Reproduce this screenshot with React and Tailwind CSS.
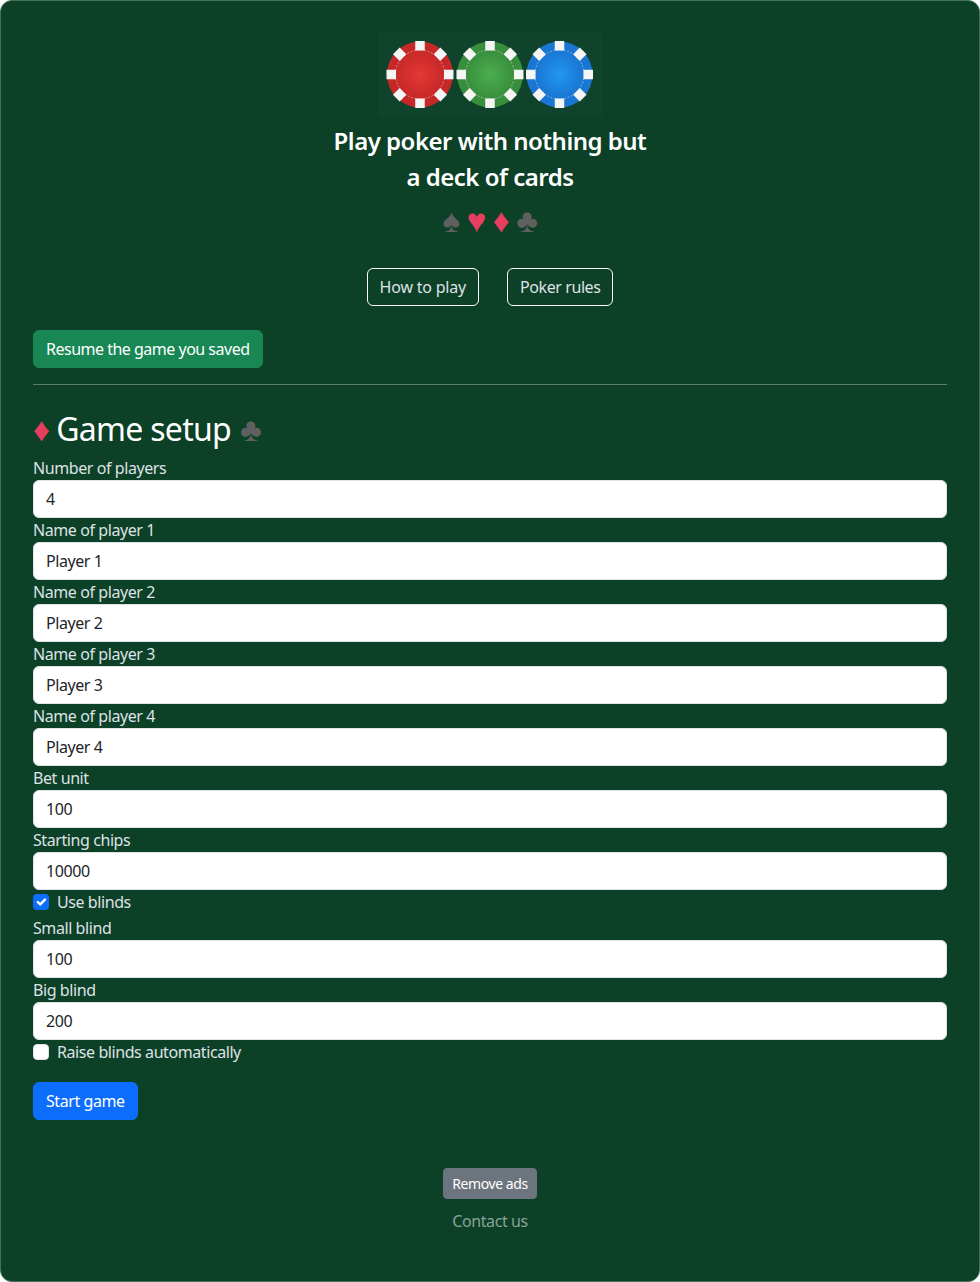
const font = { fontFamily: '"Noto Sans", sans-serif' };

const Chip = ({ cx, base, light }) => {
    const id = `grad-${cx}`;
    const angles = [0, 45, 90, 135, 180, 225, 270, 315];
    return (
        <g transform={`translate(${cx} 41.5)`}>
            <defs>
                <radialGradient id={id}>
                    <stop offset="0%" stopColor={light} />
                    <stop offset="100%" stopColor={base} />
                </radialGradient>
            </defs>
            <circle r="33" fill={base} />
            <circle r="24.5" fill={`url(#${id})`} />
            <circle r="24.5" fill="none" stroke="#fff" strokeOpacity="0.6" strokeWidth="0.7" strokeDasharray="2 1.5" />
            {angles.map((a) => (
                <rect key={a} x="-4.75" y="-33.5" width="9.5" height="9.5" fill="#f5f5f5" transform={`rotate(${a})`} />
            ))}
        </g>
    );
};

const Suit = ({ children, red }) => (
    <span
        className={`text-[33px] leading-none ${red ? 'text-[#e63e5e]' : 'text-[#606060]'}`}
        style={{ fontFamily: '"Liberation Sans", sans-serif' }}
    >
        {children}
    </span>
);

const Field = ({ label, value }) => (
    <div>
        <label className="block h-6 leading-6">{label}</label>
        <input
            readOnly
            defaultValue={value}
            className="block w-full h-[38px] px-3 rounded-md border border-[#dee2e6] bg-white text-[#212529] outline-none"
        />
    </div>
);

const Check = ({ label, checked }) => (
    <div className="flex items-center h-6 mb-0.5">
        <span
            className={`flex items-center justify-center w-4 h-4 rounded ${checked ? 'bg-[#0d6efd]' : 'bg-white border border-[#dee2e6]'}`}
        >
            {checked && (
                <svg className="w-4 h-4" viewBox="0 0 20 20" fill="none">
                    <path d="m6 10 3 3 6-6" stroke="#fff" strokeWidth="3" strokeLinecap="round" strokeLinejoin="round" />
                </svg>
            )}
        </span>
        <span className="ml-2">{label}</span>
    </div>
);

const App = () => {
    return (
        <div className="min-h-[1282px] p-8 bg-[#0c4027] border border-[#44705c] rounded-xl text-[#dee2e6] text-base tracking-[-0.42px]" style={font}>
            <div className="flex flex-col items-center">
                <svg width="224" height="84" viewBox="0 0 224 84" className="block">
                    <rect width="224" height="84" fill="#0f432b" />
                    <Chip cx={42} base="#c62828" light="#e53935" />
                    <Chip cx={112} base="#388e3c" light="#4caf50" />
                    <Chip cx={181.5} base="#1976d2" light="#2196f3" />
                </svg>
                <h1 className="mt-1.5 text-2xl leading-9 font-semibold tracking-[-0.5px] text-white text-center">
                    Play poker with nothing but
                    <br />
                    a deck of cards
                </h1>
                <div className="flex justify-center gap-[7px] h-[54px] pb-1 items-center">
                    <Suit>♠</Suit>
                    <Suit red>♥</Suit>
                    <Suit red>♦</Suit>
                    <Suit>♣</Suit>
                </div>
                <div className="flex justify-center gap-7 mt-[19px]">
                    <button className="h-[38px] px-3 rounded-md border border-white text-[#dee2e6] tracking-[-0.2px]">How to play</button>
                    <button className="h-[38px] px-3 rounded-md border border-white text-[#dee2e6]">Poker rules</button>
                </div>
            </div>

            <button className="block mt-6 h-[38px] px-3 rounded-md border border-[#198754] bg-[#198754] text-white tracking-[-0.5px]">Resume the game you saved</button>
            <hr className="mt-4 border-[#5b7f6e]" />

            <h2 className="mt-5 h-[48px] flex items-center text-[32px] leading-[48px] tracking-[-0.7px] text-white font-normal">
                <Suit red>♦</Suit>
                <span className="ml-[7px] mr-[9px]">Game setup</span>
                <Suit>♣</Suit>
            </h2>

            <form className="mt-[3px]">
                <Field label="Number of players" value="4" />
                <Field label="Name of player 1" value="Player 1" />
                <Field label="Name of player 2" value="Player 2" />
                <Field label="Name of player 3" value="Player 3" />
                <Field label="Name of player 4" value="Player 4" />
                <Field label="Bet unit" value="100" />
                <Field label="Starting chips" value="10000" />
                <Check label="Use blinds" checked />
                <Field label="Small blind" value="100" />
                <Field label="Big blind" value="200" />
                <Check label="Raise blinds automatically" />
                <button type="button" className="block mt-[18px] h-[38px] px-3 rounded-md border border-[#0d6efd] bg-[#0d6efd] text-white">Start game</button>
            </form>

            <div className="flex flex-col items-center mt-12">
                <button className="h-[31px] px-2 rounded border border-[#6c757d] bg-[#6c757d] text-white text-sm">Remove ads</button>
                <a href="#" className="mt-2.5 leading-6 text-[#86a398]">Contact us</a>
            </div>
        </div>
    );
};

export default App;
